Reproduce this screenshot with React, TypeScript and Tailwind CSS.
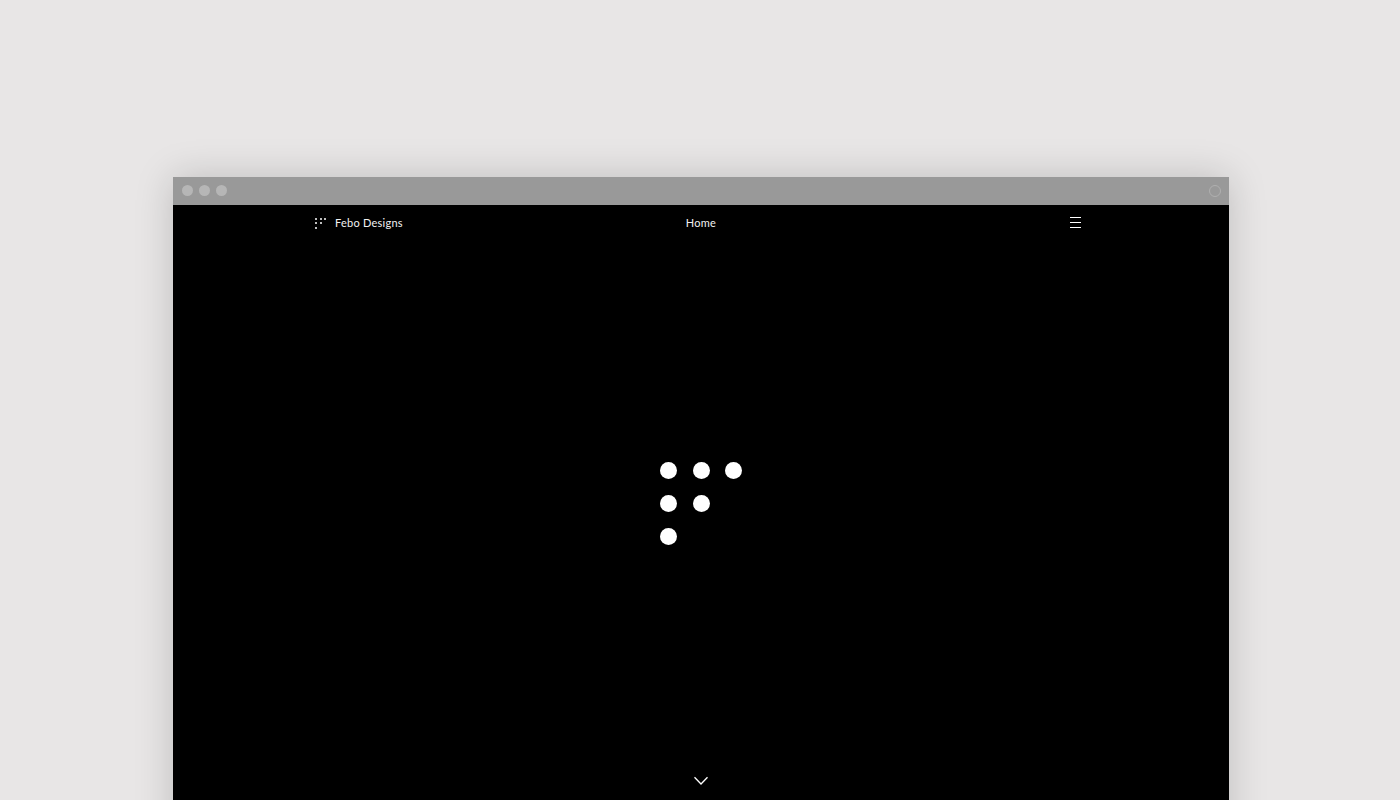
import React from 'react';

// F shaped dot mark, used big in the hero and small in the nav
const markRows = [3, 2, 1];

function DotMark({ dotClass, rowClass, gapClass }: { dotClass: string; rowClass: string; gapClass: string }) {
  return (
    <div className={`flex flex-col ${gapClass}`}>
      {markRows.map((count, r) => (
        <div key={r} className={`flex ${rowClass}`}>
          {Array.from({ length: count }).map((_, i) => (
            <span key={i} className={`block rounded-full bg-white ${dotClass}`} />
          ))}
        </div>
      ))}
    </div>
  );
}

function TitleBar() {
  return (
    <div className="flex h-[28px] items-center justify-between bg-[#999999] pb-[1px] pl-[9px] pr-[8px]">
      <div className="flex gap-[6px]">
        <span className="block h-[11px] w-[11px] rounded-full bg-[#b6b6b6]" />
        <span className="block h-[11px] w-[11px] rounded-full bg-[#b6b6b6]" />
        <span className="block h-[11px] w-[11px] rounded-full bg-[#b6b6b6]" />
      </div>
      <span className="block h-[12px] w-[12px] rounded-full border border-[#b0b0b0]" />
    </div>
  );
}

function Nav() {
  return (
    <div className="grid h-[36px] grid-cols-3 items-center px-[141px] text-[11px] tracking-[0.25px] text-[#f2f2f2]">
      <div className="ml-[1px] flex items-center gap-[9px]">
        <DotMark dotClass="h-[2px] w-[2px]" rowClass="gap-[2.5px]" gapClass="gap-[2.5px]" />
        <span>Febo Designs</span>
      </div>
      <div className="text-center">Home</div>
      <div className="flex justify-end pr-[7px]">
        <div className="flex w-[11px] -translate-y-[1px] flex-col gap-[4px]">
          <span className="block h-px bg-white" />
          <span className="block h-px bg-white" />
          <span className="block h-px bg-white" />
        </div>
      </div>
    </div>
  );
}

export default function App() {
  return (
    <div className="h-screen overflow-hidden bg-[#e8e6e6] pl-[173px] pt-[177px] font-['Lato','Liberation_Sans',sans-serif]">
      <div className="flex h-[700px] w-[1056px] flex-col bg-black shadow-[0_0_36px_rgba(0,0,0,0.18)]">
        <TitleBar />
        <Nav />
        <div className="flex justify-center pt-[221px]">
          <DotMark dotClass="h-[17px] w-[17px]" rowClass="gap-[15.5px]" gapClass="gap-[16px]" />
        </div>
        <div className="flex justify-center pt-[231px]">
          <svg width="16" height="10" viewBox="0 0 16 10" fill="none" stroke="white" strokeWidth="1.3">
            <path d="M1.5 1.2 8 8l6.5-6.8" />
          </svg>
        </div>
      </div>
    </div>
  );
}
